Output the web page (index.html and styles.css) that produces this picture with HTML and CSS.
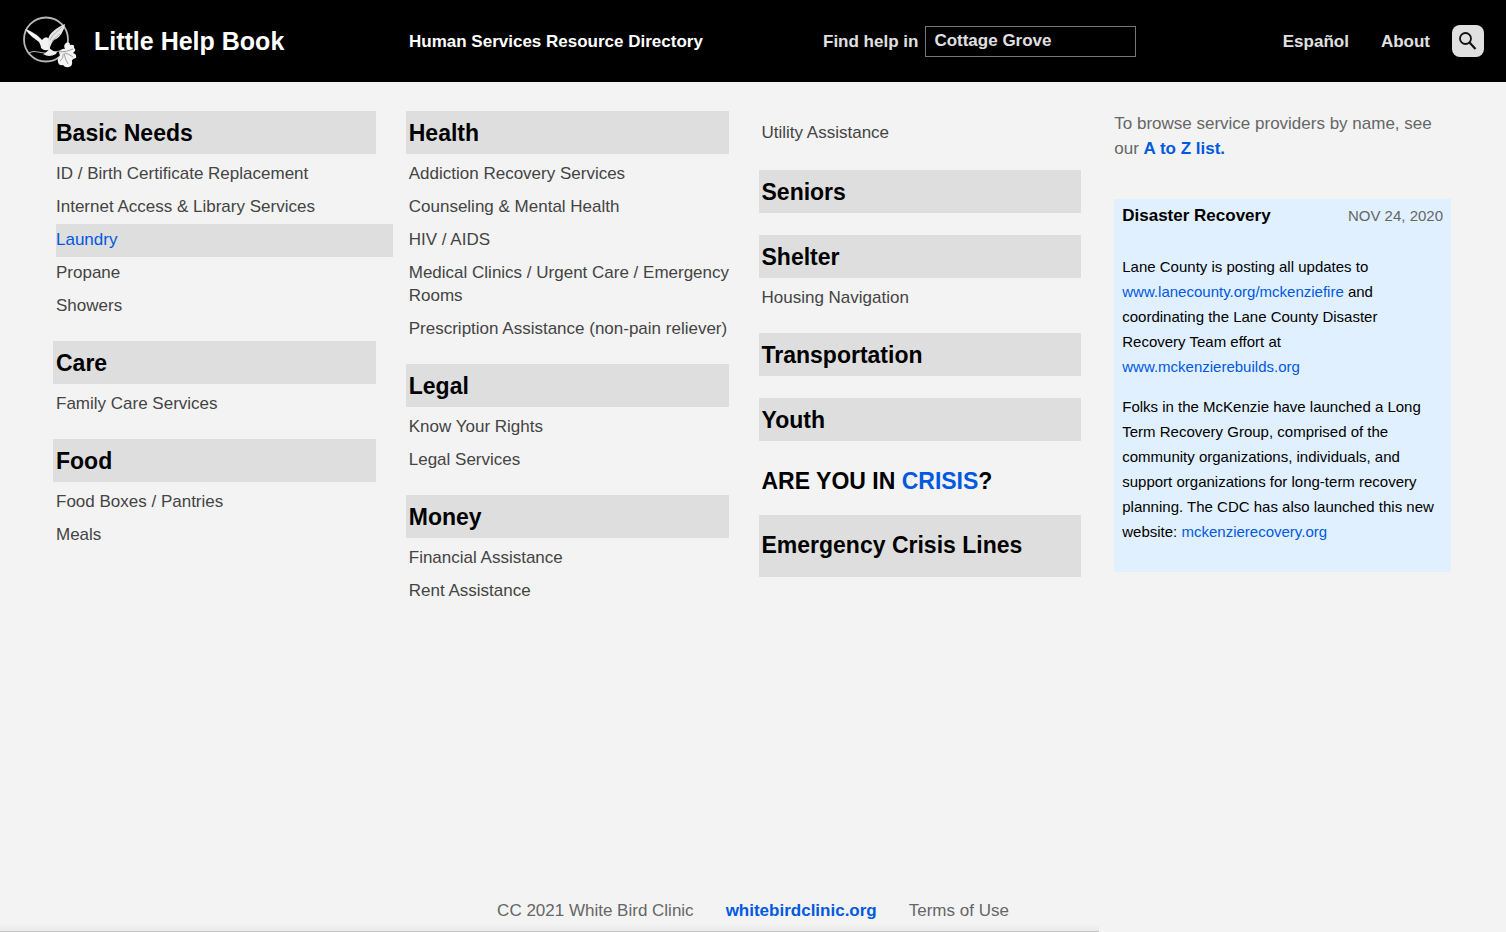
FILE: index.html
```html
<!DOCTYPE html>
<html lang="en">
<head>
<meta charset="utf-8">
<meta name="viewport" content="width=device-width, initial-scale=1">
<title>Little Help Book</title>
<link rel="stylesheet" href="styles.css">
</head>
<body>
<header class="header">
  <a class="brand" href="#">
    <svg class="logo" viewBox="0 0 55 53" aria-hidden="true">
      <circle cx="24" cy="24.500" r="22" fill="none" stroke="#b8b8b8" stroke-width="1.800"/>
      <path d="M3 14 C9 16 16 20 20 25 Q24 20 27 24 L28 34 Q23 37 19 33 C19 31 18 29 17 27 C13 24 7 20 3 14Z" fill="#f2f2f2"/>
      <path d="M26 25 C27 18 34 13 43 9 C42 16 38 23 32 25 C29 28 29 31 27 34Z" fill="#e6e6e6"/>
      <path d="M28 25 C31 19 36 16 40 12 M30 26 L38 19" fill="none" stroke="#888" stroke-width=".6"/>
      <path d="M6 39 C11 34 17 38 23 38 S38 36 46 34" fill="none" stroke="#aaa" stroke-width="1.200"/>
      <path d="M27 33 Q26 37 21 39 Q27 43 34 39 L35 37 Q30 36 27 33Z" fill="#eee"/>
      <path d="M37 37 Q40 33 43 34 Q41 30 44 28 Q48 26 48 30 Q53 29 52 33 Q55 35 51 38 Q55 39 54 43 Q50 44 50 46 Q51 51 47 52 Q43 53 41 50 Q37 51 36 47 Q35 43 38 41 Z" fill="#f4f4f4"/>
      <path d="M38 37 Q45 37 51 34 M42 38 Q43 44 46 49 M43 38 Q47 39 51 42 M41 39 Q42 43 38 46" fill="none" stroke="#777" stroke-width=".7"/>
    </svg>
    <span class="brand-name">Little Help Book</span>
  </a>
  <div class="tagline">Human Services Resource Directory</div>
  <div class="tools">
    <div class="finder">
      <label for="city">Find help in</label>
      <select id="city" class="city"><option>Cottage Grove</option></select>
    </div>
    <nav class="nav">
      <a href="#">Español</a>
      <a href="#">About</a>
      <button class="search" type="button" aria-label="Search">
        <svg viewBox="0 0 32 32" aria-hidden="true"><circle cx="13.500" cy="13.500" r="5.500" fill="none" stroke="#111" stroke-width="1.800"/><path d="M17.500 17.500 L23.500 24" stroke="#111" stroke-width="2.200"/></svg>
      </button>
    </nav>
  </div>
</header>

<main class="main">
  <div class="column">
    <section class="topic">
      <h2><a href="#">Basic Needs</a></h2>
      <ul>
        <li><a href="#">ID / Birth Certificate Replacement</a></li>
        <li><a href="#">Internet Access &amp; Library Services</a></li>
        <li><a class="active" href="#">Laundry</a></li>
        <li><a href="#">Propane</a></li>
        <li><a href="#">Showers</a></li>
      </ul>
    </section>
    <section class="topic">
      <h2><a href="#">Care</a></h2>
      <ul><li><a href="#">Family Care Services</a></li></ul>
    </section>
    <section class="topic">
      <h2><a href="#">Food</a></h2>
      <ul>
        <li><a href="#">Food Boxes / Pantries</a></li>
        <li><a href="#">Meals</a></li>
      </ul>
    </section>
  </div>

  <div class="column">
    <section class="topic">
      <h2><a href="#">Health</a></h2>
      <ul>
        <li><a href="#">Addiction Recovery Services</a></li>
        <li><a href="#">Counseling &amp; Mental Health</a></li>
        <li><a href="#">HIV / AIDS</a></li>
        <li><a href="#">Medical Clinics / Urgent Care / Emergency Rooms</a></li>
        <li><a href="#">Prescription Assistance (non-pain reliever)</a></li>
      </ul>
    </section>
    <section class="topic">
      <h2><a href="#">Legal</a></h2>
      <ul>
        <li><a href="#">Know Your Rights</a></li>
        <li><a href="#">Legal Services</a></li>
      </ul>
    </section>
    <section class="topic">
      <h2><a href="#">Money</a></h2>
      <ul>
        <li><a href="#">Financial Assistance</a></li>
        <li><a href="#">Rent Assistance</a></li>
      </ul>
    </section>
  </div>

  <div class="column">
    <section class="topic continued">
      <ul><li><a href="#">Utility Assistance</a></li></ul>
    </section>
    <section class="topic"><h2><a href="#">Seniors</a></h2></section>
    <section class="topic">
      <h2><a href="#">Shelter</a></h2>
      <ul><li><a href="#">Housing Navigation</a></li></ul>
    </section>
    <section class="topic"><h2><a href="#">Transportation</a></h2></section>
    <section class="topic"><h2><a href="#">Youth</a></h2></section>
    <p class="crisis">ARE YOU IN <a href="#">CRISIS</a>?</p>
    <section class="topic emergency"><h2><a href="#">Emergency Crisis Lines</a></h2></section>
  </div>

  <aside class="column">
    <p class="browse">To browse service providers by name, see our <a href="#">A to Z list.</a></p>
    <article class="notice">
      <div class="notice-head">
        <h3>Disaster Recovery</h3>
        <time datetime="2020-11-24">NOV 24, 2020</time>
      </div>
      <p>Lane County is posting all updates to <a href="#">www.lanecounty.org/mckenziefire</a> and coordinating the Lane County Disaster Recovery Team effort at <a href="#">www.mckenzierebuilds.org</a></p>
      <p>Folks in the McKenzie have launched a Long Term Recovery Group, comprised of the community organizations, individuals, and support organizations for long-term recovery planning. The CDC has also launched this new website: <a href="#">mckenzierecovery.org</a></p>
    </article>
  </aside>
</main>

<footer class="footer">
  <span>CC 2021 White Bird Clinic</span>
  <a class="clinic" href="#">whitebirdclinic.org</a>
  <a href="#">Terms of Use</a>
</footer>
</body>
</html>
```
FILE: styles.css
```css
* { box-sizing: border-box; }

body {
  margin: 0;
  min-height: 100vh;
  display: flex;
  flex-direction: column;
  background: #f3f3f3;
  color: #000;
  font: 17px/25px "Liberation Sans", Arial, sans-serif;
}

a { color: inherit; text-decoration: none; }
h2, h3, p, ul { margin: 0; padding: 0; }
ul { list-style: none; }

.header {
  display: grid;
  grid-template-columns: 387fr 414fr 661fr;
  align-items: center;
  min-height: 82px;
  padding: 0 22px;
  background: #000;
  color: #e0e0e0;
  font-weight: bold;
}
.brand { display: flex; align-items: center; gap: 17px; color: #fff; }
.logo { width: 55px; height: 53px; }
.brand-name { font-size: 25px; }
.tagline { color: #fff; }
.tools, .finder, .nav { display: flex; align-items: center; }
.tools { justify-content: space-between; }
.finder { gap: 7px; }
.city {
  appearance: none;
  width: 211px;
  height: 31px;
  padding: 0 8px 2px;
  border: 1px solid #767676;
  border-radius: 0;
  background: #000;
  color: #e0e0e0;
  font: inherit;
}
.nav { gap: 32px; }
.search {
  width: 32px;
  height: 32px;
  margin-left: -10px;
  padding: 0;
  border: 0;
  border-radius: 8px;
  background: #e0e0e0;
}
.search svg { display: block; }

.main {
  flex: 1;
  display: grid;
  grid-template-columns: repeat(4, minmax(0, 1fr));
  column-gap: 16px;
  padding: 29px 55px 40px 56px;
}
.topic { display: flow-root; margin-bottom: 18px; }
.topic h2 {
  margin: 0 17px 4px -3px;
  padding: 7px 3px 6px;
  background: #dedede;
  font-size: 23px;
  line-height: 30px;
}
.topic li a {
  display: block;
  padding: 4px 0 6px;
  color: #444;
  line-height: 23px;
}
.topic li a.active { background: #dedede; color: #0059e0; }
.continued { padding: 6px 0 2px; }
.crisis {
  padding: 3px 0 19px;
  font-size: 23px;
  font-weight: bold;
  line-height: 30px;
}
.crisis a, .browse a, .notice a, .clinic { color: #0059e0; }
.emergency h2 { padding: 15px 3px 17px; }

.browse { margin-bottom: 38px; color: #666; }
.browse a { font-weight: bold; }
.notice {
  padding: 4px 8px 13px;
  background: #e0f0ff;
  font-size: 15px;
}
.notice-head {
  display: flex;
  justify-content: space-between;
  margin-bottom: 26px;
}
.notice h3 { font-size: 17px; }
.notice time { color: #666; }
.notice p { margin-bottom: 15px; }

.footer {
  display: flex;
  justify-content: center;
  gap: 32px;
  padding-bottom: 9px;
  color: #666;
  background: linear-gradient(#c4c4c4, #c4c4c4) left bottom / 73% 1px no-repeat,
    linear-gradient(transparent, #e8e8e8) left bottom / 73% 8px no-repeat;
}
.clinic { font-weight: bold; }
```
